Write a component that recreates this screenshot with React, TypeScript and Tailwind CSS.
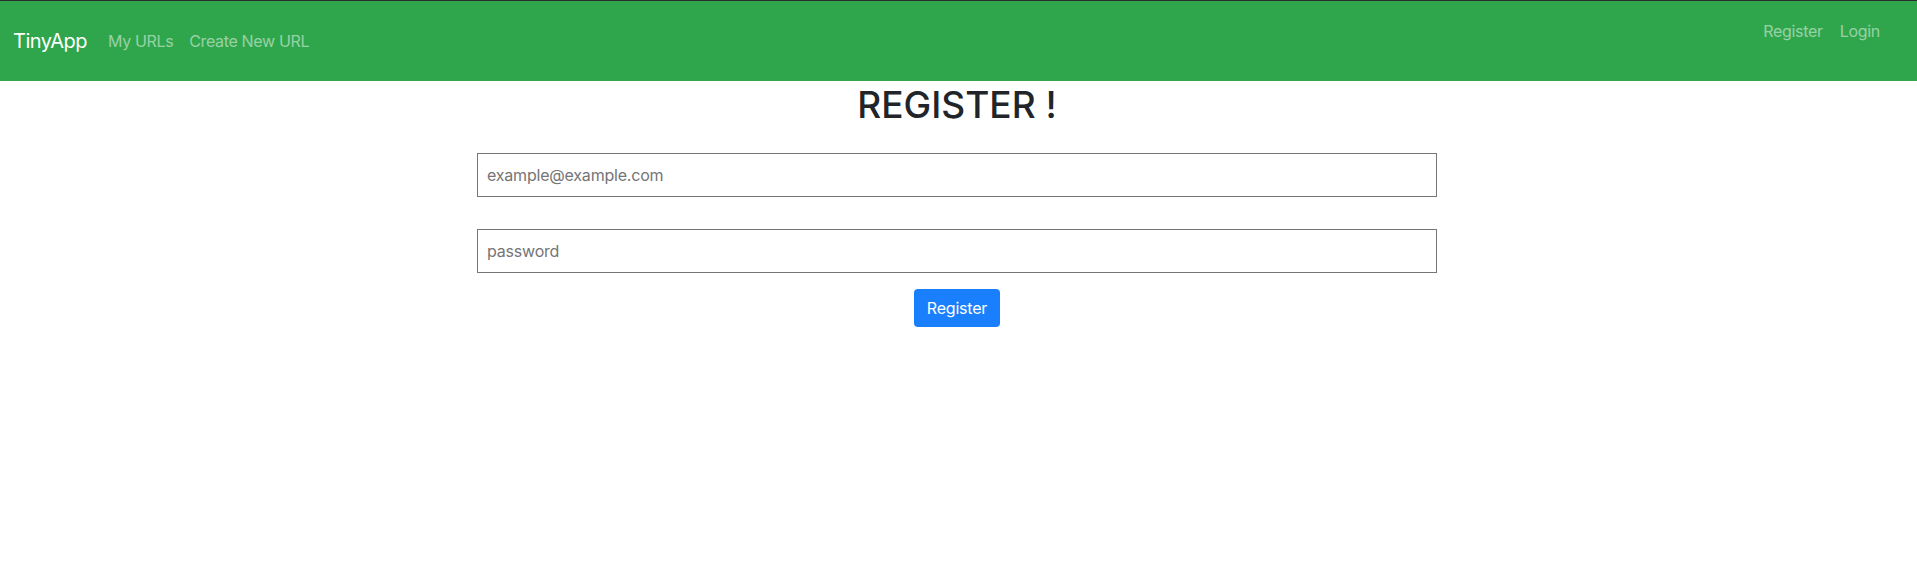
export default function App() {
  const font = { fontFamily: 'Inter, "Noto Sans", sans-serif' };
  return (
    <div className="min-h-screen bg-white" style={font}>
      <nav className="flex h-[81px] items-center justify-between border-t border-[#2d2d2d] bg-[#2fa64c] pl-[13px] pr-[37px]">
        <div className="flex items-center">
          <a className="mr-[21px] text-[20px] tracking-[-0.5px] text-white">TinyApp</a>
          <a className="mr-[16px] text-[16px] tracking-[-0.35px] text-white/50">My URLs</a>
          <a className="text-[16px] tracking-[-0.35px] text-white/50">Create New URL</a>
        </div>
        <div className="flex self-start pt-[18px]">
          <a className="mr-[17px] text-[16px] tracking-[-0.3px] text-white/50">Register</a>
          <a className="text-[16px] tracking-[-0.3px] text-white/50">Login</a>
        </div>
      </nav>

      <main className="flex flex-col items-center pr-[3px]">
        <h1 className="mt-[2px] text-[37px] font-medium leading-[1.2] text-[#212529]">REGISTER !</h1>
        <form className="mt-[26px] flex w-[960px] flex-col items-center" onSubmit={(e) => e.preventDefault()}>
          <input
            type="email"
            placeholder="example@example.com"
            className="h-[44px] w-full border border-[#767676] px-[9px] text-[16px] tracking-[-0.2px] text-[#212529] outline-none placeholder:text-[#757575]"
          />
          <input
            type="password"
            placeholder="password"
            className="mt-[32px] h-[44px] w-full border border-[#767676] px-[9px] text-[16px] tracking-[-0.2px] text-[#212529] outline-none placeholder:text-[#757575]"
          />
          <button
            type="submit"
            className="mt-[16px] h-[38px] w-[86px] rounded-[4px] bg-[#1a7ffc] text-[16px] tracking-[-0.2px] text-white"
          >
            Register
          </button>
        </form>
      </main>
    </div>
  );
}
